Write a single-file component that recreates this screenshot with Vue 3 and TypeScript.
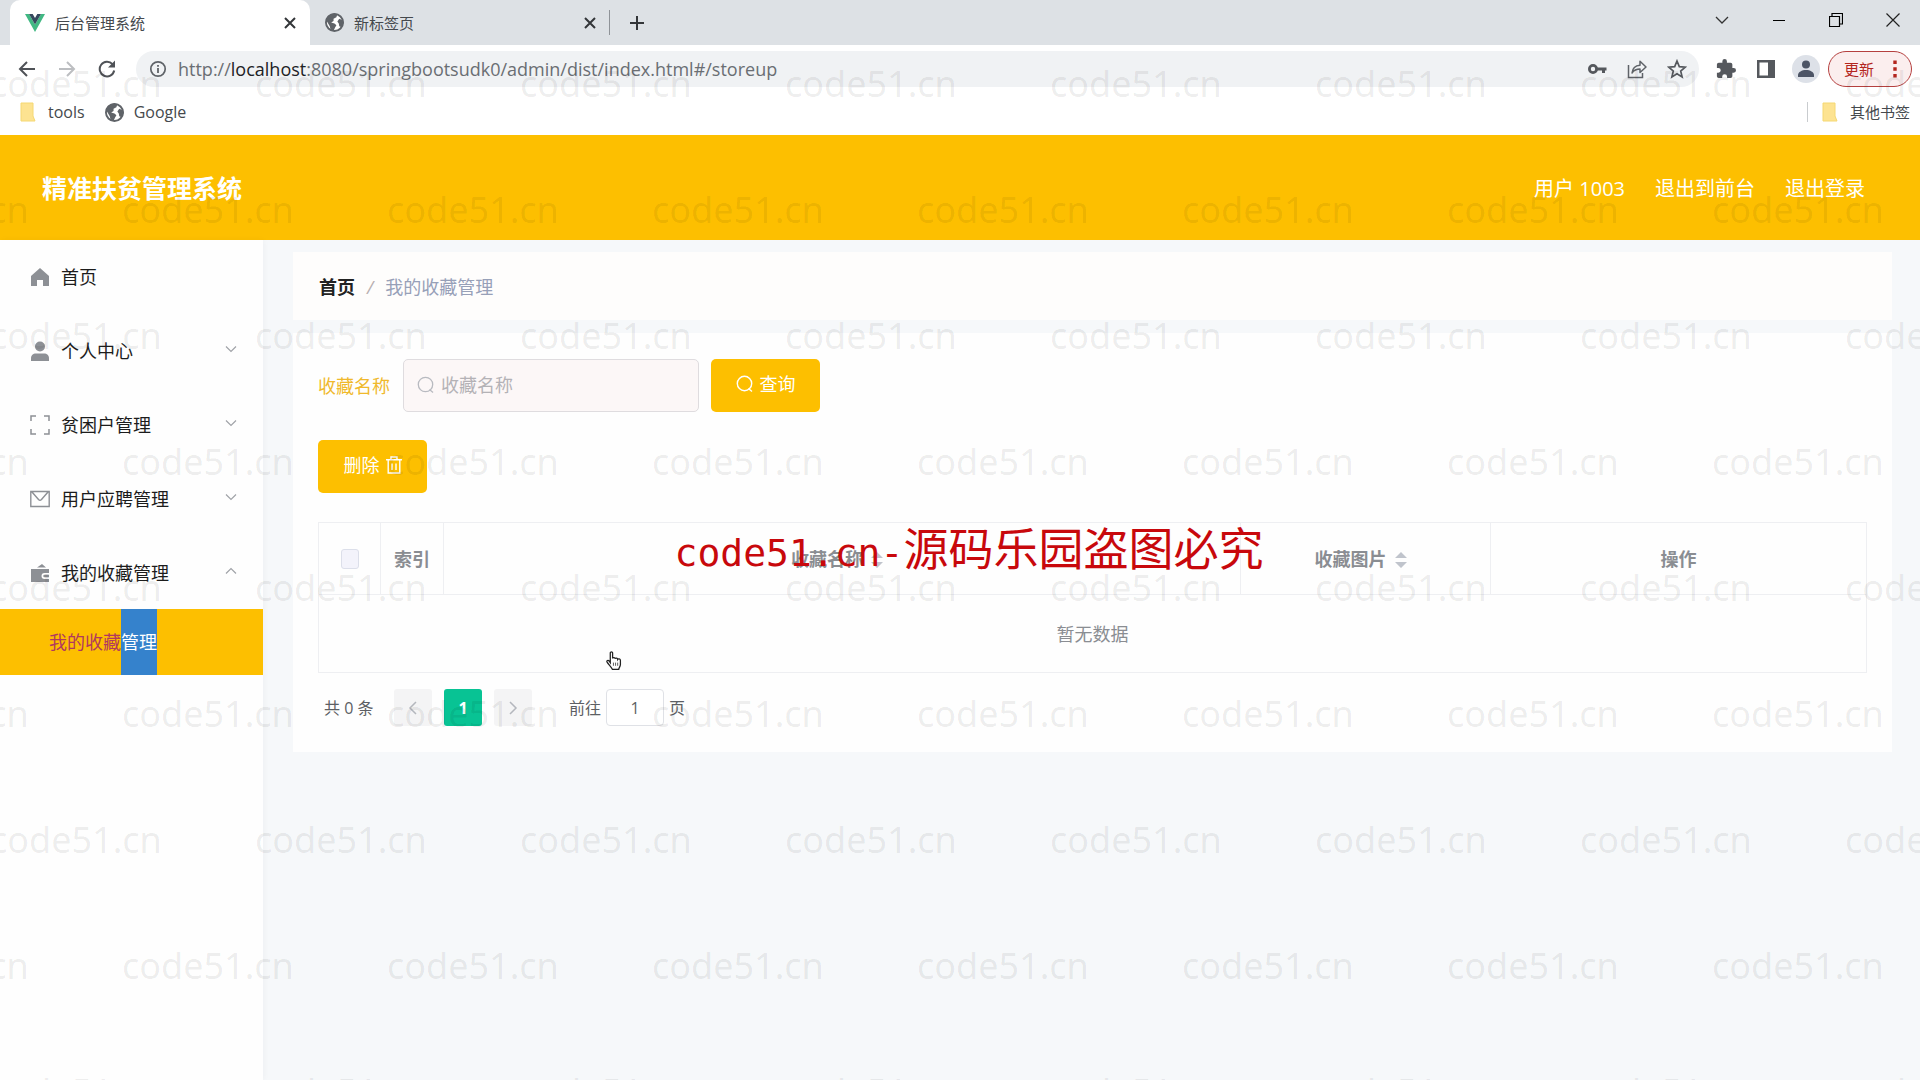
<script setup lang="ts">
import { ref } from 'vue'

interface MenuItem {
  label: string
  icon: string
  children?: string[]
  open?: boolean
}

const menu: MenuItem[] = [
  { label: '首页', icon: 'home' },
  { label: '个人中心', icon: 'user', children: [] },
  { label: '贫困户管理', icon: 'frame', children: [] },
  { label: '用户应聘管理', icon: 'mail', children: [] },
  { label: '我的收藏管理', icon: 'wallet', children: ['我的收藏管理'], open: true },
]

const keyword = ref('')
const page = ref('1')
const allChecked = ref(false)

const markRows = 9
const marksPerRow = 8
</script>

<template>
  <div class="screen">
    <header class="browser">
      <div class="tabstrip">
        <div class="tab active">
          <svg class="fav" viewBox="0 0 20 18" aria-hidden="true">
            <path d="M0 0h4l6 10.500 6-10.500h4L10 18z" fill="#41b883" />
            <path d="M4 0h3.700L10 4l2.300-4H16l-6 10.500z" fill="#35495e" />
          </svg>
          <span class="tab-title">后台管理系统</span>
          <button class="plain" type="button" aria-label="关闭">
            <svg width="12" height="12" viewBox="0 0 12 12"><path d="M1 1l10 10M11 1L1 11" stroke="#333639" stroke-width="2" /></svg>
          </button>
        </div>
        <div class="tab">
          <svg class="globe" viewBox="2 2 20 20" aria-hidden="true"><circle cx="12" cy="12" r="9" fill="#fff" stroke="#5f6368" stroke-width="2" /><path d="M3 9c1-3.500 4-6 8-6.500L15 3l-1 3.500-3 1.500v2.500L8.500 12l3.500 1 2 2-1.500 2.500-1.500 3.500-3-1-1-4zM17 8l4 1.500.5 3.500-2 4-2.500-1-.5-3-1.500-2z" fill="#5f6368" /></svg>
          <span class="tab-title">新标签页</span>
          <button class="plain" type="button" aria-label="关闭">
            <svg width="12" height="12" viewBox="0 0 12 12"><path d="M1 1l10 10M11 1L1 11" stroke="#333639" stroke-width="2" /></svg>
          </button>
        </div>
        <span class="tab-sep"></span>
        <button class="plain new-tab" type="button" aria-label="新标签">
          <svg width="16" height="16" viewBox="0 0 16 16"><path d="M8 1v14M1 8h14" stroke="#333639" stroke-width="2" /></svg>
        </button>
        <div class="win">
          <button class="plain" type="button" aria-label="搜索标签"><svg width="14" height="14" viewBox="0 0 14 14"><path d="M1 4l6 6 6-6" fill="none" stroke="#333" stroke-width="1.300" /></svg></button>
          <button class="plain" type="button" aria-label="最小化"><svg width="14" height="14" viewBox="0 0 14 14"><path d="M1 7.500h12" stroke="#000" /></svg></button>
          <button class="plain" type="button" aria-label="还原"><svg width="14" height="14" viewBox="0 0 14 14"><path d="M.5 3.500h10v10h-10zM3 3.500v-3h10.500v10.500H11" fill="none" stroke="#000" stroke-width="1.200" /></svg></button>
          <button class="plain" type="button" aria-label="关闭窗口"><svg width="14" height="14" viewBox="0 0 14 14"><path d="M.5.5l13 13M13.500.5l-13 13" stroke="#222" stroke-width="1.200" /></svg></button>
        </div>
      </div>

      <div class="toolbar">
        <div class="nav">
          <button class="plain" type="button" aria-label="后退"><svg width="18" height="18" viewBox="0 0 18 18"><path d="M17 9H2M9 2L2 9l7 7" fill="none" stroke="#4f5257" stroke-width="2" /></svg></button>
          <button class="plain" type="button" aria-label="前进"><svg width="18" height="18" viewBox="0 0 18 18"><path d="M1 9h15M9 2l7 7-7 7" fill="none" stroke="#bcbec1" stroke-width="2" /></svg></button>
          <button class="plain" type="button" aria-label="刷新"><svg width="18" height="18" viewBox="0 0 18 18"><path d="M14.500 4.200A7.300 7.300 0 1 0 16.200 10.500" fill="none" stroke="#4f5257" stroke-width="2" /><path d="M17 .5v7h-7z" fill="#4f5257" /></svg></button>
        </div>
        <div class="omnibox">
          <svg width="18" height="18" viewBox="0 0 18 18" aria-hidden="true"><circle cx="9" cy="9" r="7.200" fill="none" stroke="#5f6368" stroke-width="1.700" /><path d="M9 8v5M9 5v1.800" stroke="#5f6368" stroke-width="1.800" /></svg>
          <div class="url" role="textbox" aria-label="地址"><span>http://</span><span class="host">localhost</span><span>:8080/springbootsudk0/admin/dist/index.html#/storeup</span></div>
          <button class="plain" type="button" aria-label="密码"><svg width="20" height="20" viewBox="0 0 20 20"><circle cx="6" cy="10" r="3.600" fill="none" stroke="#55585d" stroke-width="2.800" /><path d="M10 8.500h9.500v3H18V14h-3v-2.500h-5z" fill="#55585d" /></svg></button>
          <button class="plain" type="button" aria-label="分享"><svg width="20" height="20" viewBox="0 0 20 20"><path d="M1.500 6v12.500H15.500V14" fill="none" stroke="#5f6368" stroke-width="1.500" /><path d="M5 14c.5-5 3.500-7.500 8-7.800V2.200L19 8l-6 5.500V10c-3.500 0-6 1-8 4z" fill="none" stroke="#5f6368" stroke-width="1.500" stroke-linejoin="round" /></svg></button>
          <button class="plain" type="button" aria-label="收藏"><svg width="20" height="20" viewBox="0 0 20 20"><path d="M10 2l2.300 5.600 6 .5-4.600 3.900 1.400 5.900L10 14.700l-5.100 3.200L6.300 12 1.700 8.100l6-.5z" fill="none" stroke="#55585d" stroke-width="1.700" /></svg></button>
        </div>
        <div class="tools">
          <button class="plain" type="button" aria-label="扩展"><svg width="20" height="20" viewBox="1 1 22 22"><path d="M20.500 11H19V7a2 2 0 0 0-2-2h-4V3.500a2.500 2.500 0 0 0-5 0V5H4a2 2 0 0 0-2 2v3.800h1.500a2.700 2.700 0 0 1 0 5.400H2V20a2 2 0 0 0 2 2h3.800v-1.500a2.700 2.700 0 0 1 5.400 0V22H17a2 2 0 0 0 2-2v-4h1.500a2.500 2.500 0 0 0 0-5z" fill="#55585d" /></svg></button>
          <button class="plain" type="button" aria-label="侧边栏"><svg width="18" height="20" viewBox="0 0 18 20"><path d="M0 1h18v18H0zM2.500 3.500v13H11v-13z" fill="#55585d" fill-rule="evenodd" /></svg></button>
          <button class="plain avatar" type="button" aria-label="用户"><svg width="28" height="28" viewBox="0 0 28 28"><circle cx="14" cy="14" r="14" fill="#dde1e8" /><circle cx="14" cy="9.500" r="4" fill="#4d5566" /><path d="M6 22v-2c0-3 4-5 8-5s8 2 8 5v2z" fill="#4d5566" /></svg></button>
          <button class="update" type="button">更新<svg width="4" height="18" viewBox="0 0 4 18" aria-hidden="true"><path d="M.3.5h3.400v3.400H.3zM.3 7.300h3.400v3.400H.3zM.3 14.100h3.400v3.400H.3z" fill="#b3261e" /></svg></button>
        </div>
      </div>

      <div class="bookmarks">
        <a href="#tools"><svg width="16" height="20" viewBox="0 0 16 20" aria-hidden="true"><path d="M1 1h12v13l2 5H1z" fill="#fde391" stroke="#f5d872" /></svg>tools</a>
        <a href="#google" class="google"><svg class="globe" viewBox="2 2 20 20" aria-hidden="true"><circle cx="12" cy="12" r="9" fill="#fff" stroke="#5f6368" stroke-width="2" /><path d="M3 9c1-3.500 4-6 8-6.500L15 3l-1 3.500-3 1.500v2.500L8.500 12l3.500 1 2 2-1.500 2.500-1.500 3.500-3-1-1-4zM17 8l4 1.500.5 3.500-2 4-2.500-1-.5-3-1.500-2z" fill="#5f6368" /></svg>Google</a>
        <a href="#others" class="others"><svg width="16" height="20" viewBox="0 0 16 20" aria-hidden="true"><path d="M1 1h12v13l2 5H1z" fill="#fde391" stroke="#f5d872" /></svg>其他书签</a>
      </div>
    </header>

    <header class="topbar">
      <h1>精准扶贫管理系统</h1>
      <nav>
        <span>用户 1003</span>
        <a href="#front">退出到前台</a>
        <a href="#logout">退出登录</a>
      </nav>
    </header>

    <div class="body">
      <aside>
        <ul class="menu">
          <li v-for="item in menu" :key="item.label">
            <a href="#menu" class="item">
              <svg class="micon" viewBox="0 0 20 20" aria-hidden="true">
                <path v-if="item.icon === 'home'" d="M10 1l9 8v10h-6v-6H7v6H1V9z" fill="#8d9095" />
                <template v-else-if="item.icon === 'user'"><circle cx="10" cy="5.500" r="5" fill="#8d9095" /><path d="M1 20v-2.500C1 14 3 12.500 6 12.500h8c3 0 5 1.500 5 5V20z" fill="#8d9095" /></template>
                <path v-else-if="item.icon === 'frame'" d="M1 6V1h5M14 1h5v5M19 14v5h-5M6 19H1v-5" fill="none" stroke="#8d9095" stroke-width="1.500" />
                <path v-else-if="item.icon === 'mail'" d="M.8 2.500h18.400v15H.8zM2 3l6.500 7.500q1.500 1.500 3 0L18 3" fill="none" stroke="#8d9095" stroke-width="1.400" />
                <path v-else d="M7 4.500L12 1l4 3.500zM1 6h18v4h-4.500a2.500 2.500 0 0 0 0 6H19v3H1zM14.500 11.800h4.500v2.500h-4.500a1.200 1.200 0 0 1 0-2.500z" fill="#8d9095" />
              </svg>
              <span>{{ item.label }}</span>
              <svg v-if="item.children" class="arrow" :class="{ open: item.open }" viewBox="0 0 12 12" aria-hidden="true"><path d="M1 3.500l5 5 5-5" fill="none" stroke="#a0a3a8" stroke-width="1.200" /></svg>
            </a>
            <a v-for="child in item.children" :key="child" href="#/storeup" class="sub">{{ child.slice(0, 4) }}<mark>{{ child.slice(4) }}</mark></a>
          </li>
        </ul>
      </aside>

      <main>
        <nav class="crumbs" aria-label="面包屑"><a href="#home">首页</a><i>/</i><span>我的收藏管理</span></nav>

        <section class="card">
          <form class="search" @submit.prevent>
            <label for="kw">收藏名称</label>
            <div class="field">
              <svg width="18" height="18" viewBox="0 0 18 18" aria-hidden="true"><circle cx="8.500" cy="8.500" r="7.200" fill="none" stroke="#b8bac0" stroke-width="1.300" /><path d="M12.500 13.500l3.500 3" stroke="#b8bac0" stroke-width="1.300" /></svg>
              <input id="kw" v-model="keyword" type="text" placeholder="收藏名称" />
            </div>
            <button class="btn" type="submit"><svg width="18" height="18" viewBox="0 0 18 18" aria-hidden="true"><circle cx="8.500" cy="8.500" r="7.200" fill="none" stroke="#fff" stroke-width="1.400" /><path d="M12.500 13.500l3.500 3" stroke="#fff" stroke-width="1.400" /></svg>查询</button>
          </form>

          <div class="actions">
            <button class="btn" type="button">删除<svg width="16" height="18" viewBox="0 0 16 18" aria-hidden="true"><path d="M0 3.700h16M5 3.500V1h6v2.500M2.200 4v13h11.600V4M6 7.500V14M10 7.500V14" fill="none" stroke="#fff" stroke-width="1.400" /></svg></button>
          </div>

          <table>
            <colgroup><col class="c-check" /><col class="c-idx" /><col /><col class="c-pic" /><col class="c-op" /></colgroup>
            <thead>
              <tr>
                <th><input v-model="allChecked" type="checkbox" aria-label="全选" /></th>
                <th>索引</th>
                <th>收藏名称<svg class="sort" viewBox="0 0 12 18" aria-hidden="true"><path d="M0 7l6-6 6 6zM0 11l6 6 6-6z" fill="#c0c4cc" /></svg></th>
                <th>收藏图片<svg class="sort" viewBox="0 0 12 18" aria-hidden="true"><path d="M0 7l6-6 6 6zM0 11l6 6 6-6z" fill="#c0c4cc" /></svg></th>
                <th>操作</th>
              </tr>
            </thead>
            <tbody>
              <tr><td colspan="5">暂无数据</td></tr>
            </tbody>
          </table>

          <div class="pager">
            <span class="total">共 0 条</span>
            <button type="button" disabled aria-label="上一页"><svg width="12" height="14" viewBox="0 0 12 14"><path d="M9 1L3 7l6 6" fill="none" stroke="#b4b7bd" stroke-width="1.500" /></svg></button>
            <button type="button" class="on">1</button>
            <button type="button" disabled aria-label="下一页"><svg width="12" height="14" viewBox="0 0 12 14"><path d="M3 1l6 6-6 6" fill="none" stroke="#b4b7bd" stroke-width="1.500" /></svg></button>
            <label class="jump">前往<input v-model="page" type="text" />页</label>
          </div>
        </section>
      </main>
    </div>

    <div class="marks" aria-hidden="true">
      <div v-for="r in markRows" :key="r" class="mark-row"><span v-for="c in marksPerRow" :key="c">code51.cn</span></div>
    </div>
    <div class="notice"><span>code51.cn-</span>源码乐园盗图必究</div>
    <svg class="pointer" viewBox="0 0 16 18" aria-hidden="true"><path d="M4 11V2c0-1.500 2.200-1.500 2.200 0v5c.3-1.200 2.400-1 2.400.4.400-1 2.300-.8 2.400.5.500-.9 2.600-.6 2.600 1v4c0 2-1.600 3-1.600 4.500H6C5 15 2.500 13 1 10.500 0 9 2 8.300 3 9.500z" fill="#fff" stroke="#222" stroke-width="1.200" /><path d="M7 11v3M9 11v3M11 11v3" stroke="#444" stroke-width=".8" /></svg>
  </div>
</template>

<style>
body {
  margin: 0;
}
</style>

<style scoped>
* {
  box-sizing: border-box;
}
.screen {
  position: relative;
  display: flex;
  flex-direction: column;
  min-height: 100vh;
  overflow: hidden;
  background: #f6f8fa;
  font-family: 'Open Sans', 'Noto Sans CJK SC', sans-serif;
  font-size: 18px;
  line-height: 24px;
  color: #222;
}
a {
  color: inherit;
  text-decoration: none;
}
button,
input {
  font: inherit;
}
svg {
  display: block;
  flex: none;
}
.plain {
  display: flex;
  padding: 0;
  border: 0;
  background: none;
}

/* browser chrome */
.browser {
  background: #fff;
  font-size: 15px;
}
.tabstrip {
  display: flex;
  align-items: center;
  height: 45px;
  padding-left: 10px;
  background: #dde1e5;
}
.tab {
  display: flex;
  align-items: center;
  width: 300px;
  height: 45px;
  padding: 0 14px 0 15px;
  color: #45494d;
}
.tab.active {
  border-radius: 10px 10px 0 0;
  background: #fff;
}
.tab-title {
  flex: 1;
  margin-left: 10px;
}
.fav {
  width: 20px;
  height: 18px;
}
.globe {
  width: 19px;
  height: 19px;
}
.tab-sep {
  width: 1px;
  height: 25px;
  margin-left: -1px;
  background: #8f9398;
}
.new-tab {
  margin-left: 19px;
}
.win {
  display: flex;
  gap: 43px;
  margin-left: auto;
  padding: 0 20px 6px 0;
}
.toolbar {
  display: flex;
  align-items: center;
  height: 48px;
  padding: 0 8px 0 18px;
}
.nav {
  display: flex;
  gap: 22px;
  width: 118px;
}
.omnibox {
  display: flex;
  flex: 1;
  align-items: center;
  gap: 20px;
  height: 36px;
  padding: 0 12px 0 13px;
  border-radius: 18px;
  background: #f0f2f4;
}
.url {
  flex: 1;
  margin-left: -9px;
  font-size: 18px;
  color: #6a6e73;
}
.host {
  color: #202124;
}
.tools {
  display: flex;
  align-items: center;
  gap: 21px;
  margin-left: 17px;
}
.avatar {
  margin-left: -4px;
}
.update {
  display: flex;
  align-items: center;
  justify-content: space-between;
  width: 84px;
  height: 36px;
  margin-left: -13px;
  padding: 0 14px 0 15px;
  border: 1px solid #b5403f;
  border-radius: 18px;
  background: #fbeeee;
  color: #b3261e;
}
.bookmarks {
  display: flex;
  align-items: center;
  height: 42px;
  padding: 0 10px 4px 20px;
  font-size: 16px;
  color: #45494d;
}
.bookmarks a {
  display: flex;
  align-items: center;
  gap: 12px;
}
.bookmarks .google {
  gap: 10px;
  margin-left: 20px;
}
.bookmarks .others {
  margin-left: auto;
  padding-left: 14px;
  border-left: 1px solid #c9cccf;
  font-size: 15px;
  line-height: 20px;
}

/* application */
.topbar {
  display: flex;
  align-items: center;
  justify-content: space-between;
  height: 105px;
  padding: 0 55px 0 42px;
  background: #fdbf00;
  color: #fff;
}
.topbar h1 {
  margin: 0;
  font-size: 25px;
  line-height: 32px;
}
.topbar nav {
  display: flex;
  gap: 30px;
  padding-top: 2px;
  font-size: 20px;
}
.body {
  display: flex;
  flex: 1;
}
aside {
  width: 263px;
  background: #fefefe;
  box-shadow: 1px 0 6px rgba(0, 21, 41, 0.04);
}
.menu {
  display: flex;
  flex-direction: column;
  gap: 1px;
  margin: 0;
  padding: 0;
  list-style: none;
}
.item {
  display: flex;
  align-items: center;
  gap: 11px;
  height: 73px;
  padding: 0 26px 0 30px;
  color: #1c1c1c;
}
.micon {
  width: 20px;
  height: 20px;
}
.arrow {
  width: 12px;
  height: 12px;
  margin: 0 0 4px auto;
}
.arrow.open {
  transform: rotate(180deg);
}
.sub {
  display: flex;
  align-items: center;
  height: 66px;
  padding-left: 49px;
  background: #fdbf00;
  color: #b0395f;
}
.sub mark {
  background: #3582cc;
  color: #fff;
  line-height: 66px;
}
main {
  flex: 1;
  padding: 12px 28px 0 30px;
}
.crumbs {
  display: flex;
  align-items: center;
  height: 68px;
  margin-bottom: 13px;
  padding: 2px 26px 0;
  background: #fefdfc;
  color: #97a0b8;
}
.crumbs a {
  color: #222;
  font-weight: 700;
}
.crumbs i {
  margin: 0 12px;
  color: #b8b0b0;
}
.card {
  padding: 26px 25px;
  background: #fefefe;
}
.search {
  display: flex;
  align-items: center;
}
.search label {
  width: 85px;
  color: #f0b92c;
}
.field {
  display: flex;
  align-items: center;
  gap: 6px;
  width: 296px;
  height: 53px;
  margin-right: 12px;
  padding: 0 13px 2px;
  border: 1px solid #dfdcdf;
  border-radius: 5px;
  background: #fcf7f7;
}
.field input {
  width: 100%;
  padding: 0;
  border: 0;
  outline: 0;
  background: none;
}
.field input::placeholder {
  color: #b4b2b6;
}
.btn {
  display: flex;
  align-items: center;
  justify-content: center;
  gap: 6px;
  width: 109px;
  height: 53px;
  padding: 0 0 3px;
  border: 0;
  border-radius: 5px;
  background: #fdbf00;
  color: #fff;
}
.actions {
  margin: 28px 0 29px;
}
table {
  width: 100%;
  border-collapse: collapse;
  table-layout: fixed;
  color: #8a8d92;
}
.c-check {
  width: 62px;
}
.c-idx {
  width: 63px;
}
.c-pic {
  width: 250px;
}
.c-op {
  width: 376px;
}
th,
td {
  padding: 0;
  border: 1px solid #eeeff2;
  text-align: center;
}
th {
  height: 72px;
}
td {
  height: 78px;
}
th input {
  display: block;
  width: 18px;
  height: 20px;
  margin: 0 auto;
  border: 1px solid #dcdfea;
  border-radius: 3px;
  appearance: none;
  background: #f3f3fb;
}
th input:checked {
  background: #00c292;
}
.sort {
  display: inline-block;
  width: 12px;
  height: 18px;
  margin: 0 10px 0 8px;
  vertical-align: -3px;
}
.pager {
  display: flex;
  align-items: center;
  margin-top: 16px;
  padding-left: 6px;
  font-size: 16px;
  color: #5c5f64;
}
.total {
  width: 70px;
}
.pager button {
  display: flex;
  align-items: center;
  justify-content: center;
  width: 38px;
  height: 37px;
  margin-right: 12px;
  padding: 0;
  border: 0;
  border-radius: 3px;
  background: #f4f4f5;
}
.pager .on {
  background: #08c394;
  color: #fff;
  font-weight: 700;
}
.jump {
  display: flex;
  align-items: center;
  gap: 5px;
  margin-left: 25px;
}
.jump input {
  width: 58px;
  height: 37px;
  padding: 0;
  border: 1px solid #dfe1e6;
  border-radius: 4px;
  background: #fff;
  color: inherit;
  text-align: center;
}

/* layers above the page */
.marks {
  position: absolute;
  inset: 0;
  overflow: hidden;
  padding-top: 21px;
  pointer-events: none;
  font-family: 'Noto Sans', sans-serif;
  font-size: 36px;
  line-height: 126px;
  color: rgba(0, 0, 0, 0.08);
}
.mark-row {
  display: flex;
  margin-left: -10px;
}
.mark-row:nth-child(even) {
  margin-left: -143px;
}
.mark-row span {
  flex: none;
  width: 265px;
}
.notice {
  position: absolute;
  top: 519px;
  left: 0;
  right: 0;
  padding-left: 18px;
  text-align: center;
  pointer-events: none;
  font-size: 45px;
  line-height: 60px;
  color: #c8080c;
}
.notice span {
  font-family: 'DejaVu Sans Mono', monospace;
  font-size: 38px;
}
.pointer {
  position: absolute;
  top: 651px;
  left: 606px;
  width: 17px;
  height: 19px;
}
</style>
